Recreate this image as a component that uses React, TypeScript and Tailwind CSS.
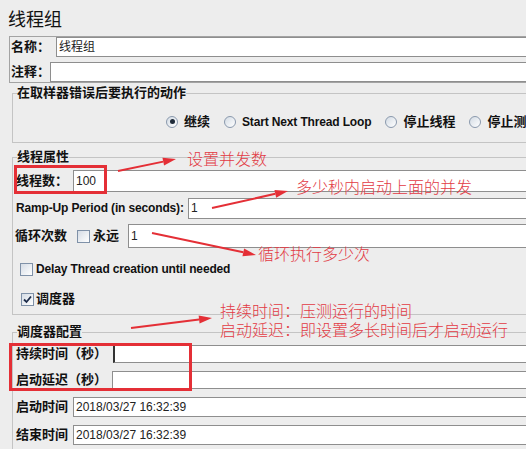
import React from 'react';

const Radio = ({ checked = false, label, latin = false }: { checked?: boolean; label: string; latin?: boolean }) => (
  <div className="flex shrink-0 items-center gap-[6px]">
    <span className="flex h-[12px] w-[12px] items-center justify-center rounded-full border border-[#8a99ad] bg-linear-to-br from-[#d3dbe4] to-white">
      {checked && <span className="h-[5px] w-[5px] rounded-full bg-[#1e2a38]" />}
    </span>
    <span
      className={`whitespace-nowrap font-bold leading-none ${latin ? 'text-[12px] tracking-[-0.15px]' : 'text-[13px]'}`}
    >
      {label}
    </span>
  </div>
);

const Check = ({ checked = false }: { checked?: boolean }) => (
  <span className="flex h-[13px] w-[13px] shrink-0 items-center justify-center border border-[#7f91a8] bg-linear-to-br from-[#d5dce5] to-white">
    {checked && (
      <svg width="11" height="11" viewBox="0 0 11 11">
        <path d="M2 5.5 L4.5 8 L9 2.5" fill="none" stroke="#1d2c4a" strokeWidth="1.8" />
      </svg>
    )}
  </span>
);

const Field = ({ value = '', h, caret = false }: { value?: string; h: string; caret?: boolean }) => (
  <div
    className={`flex flex-1 items-center border border-r-0 border-[#8e8e8e] bg-white pl-[2px] text-[12px] text-[#222] ${h} ${
      caret ? 'border-l-2 border-l-[#333]' : ''
    }`}
  >
    {value}
  </div>
);

const Label = ({ text, w, size = 'text-[13px]' }: { text: string; w: string; size?: string }) => (
  <span className={`shrink-0 whitespace-nowrap font-bold ${size} ${w}`}>{text}</span>
);

const Note = ({ children, className }: { children: React.ReactNode; className: string }) => (
  <div
    className={`absolute whitespace-nowrap font-['Noto_Sans_CJK_SC',sans-serif] text-[16px] font-light leading-[19px] text-[#e23a44] ${className}`}
  >
    {children}
  </div>
);

const Arrow = ({ x1, y1, x2, y2 }: { x1: number; y1: number; x2: number; y2: number }) => {
  const a = Math.atan2(y2 - y1, x2 - x1);
  const len = 13;
  const w = 4;
  const bx = x2 - len * Math.cos(a);
  const by = y2 - len * Math.sin(a);
  const px = -Math.sin(a) * w;
  const py = Math.cos(a) * w;
  return (
    <g>
      <line x1={x1} y1={y1} x2={bx} y2={by} stroke="#e42f36" strokeWidth="2" />
      <polygon points={`${x2},${y2} ${bx + px},${by + py} ${bx - px},${by - py}`} fill="#e42f36" />
    </g>
  );
};

export default function App() {
  return (
    <div className="relative h-[449px] w-[526px] overflow-hidden bg-[#ededed] font-['Liberation_Sans','Noto_Sans_CJK_SC',sans-serif] text-[#111]">
      <div className="w-[640px]">
        <div className="flex h-[36px] items-center pl-[8px] font-['Noto_Sans_CJK_SC',sans-serif] text-[18px]">线程组</div>

        {/* name / comment */}
        <div className="ml-[9px] border-y border-l border-[#a3a3a3]">
          <div className="flex h-[20px] items-center pl-[1px]">
            <Label text="名称：" w="w-[45px]" />
            <Field h="h-[20px]" value="线程组" />
          </div>
          <div className="mt-[5px] flex h-[20px] items-center pl-[1px]">
            <Label text="注释：" w="w-[39px]" />
            <Field h="h-[20px]" />
          </div>
        </div>

        {/* action on error */}
        <fieldset className="ml-[12px] mt-[2px] border border-r-0 border-[#c4c4c4]">
          <legend className="ml-[4px] text-[13px] font-bold leading-[16px]">在取样器错误后要执行的动作</legend>
          <div className="flex h-[41px] items-center gap-[14px] pl-[153px]">
            <Radio checked label="继续" />
            <Radio latin label="Start Next Thread Loop" />
            <Radio label="停止线程" />
            <Radio label="停止测试" />
          </div>
        </fieldset>

        {/* thread properties */}
        <fieldset className="ml-[12px] mt-[6px] border border-r-0 border-[#c4c4c4] pb-[3px]">
          <legend className="ml-[4px] text-[13px] font-bold leading-[16px]">线程属性</legend>
          <div className="mt-[2px] flex h-[28px] items-center pl-[3px]">
            <Label text="线程数：" w="w-[57px]" />
            <Field h="h-[22px]" value="100" />
          </div>
          <div className="flex h-[26px] items-center pl-[3px]">
            <Label text="Ramp-Up Period (in seconds):" w="w-[172px] tracking-[-0.15px]" size="text-[12px]" />
            <Field h="h-[21px]" value="1" />
          </div>
          <div className="flex h-[30px] items-center pl-[2px]">
            <Label text="循环次数" w="w-[62px]" />
            <Check />
            <Label text="永远" w="ml-[3px] w-[35px]" />
            <Field h="h-[24px]" value="1" />
          </div>
          <div className="flex h-[36px] items-center gap-[3px] pl-[7px]">
            <Check />
            <Label text="Delay Thread creation until needed" w="tracking-[-0.15px]" size="text-[12px]" />
          </div>
          <div className="flex h-[24px] items-center gap-[2px] pl-[8px]">
            <Check checked />
            <Label text="调度器" w="" />
          </div>
        </fieldset>

        {/* scheduler */}
        <fieldset className="ml-[12px] mt-[9px] border border-r-0 border-[#c4c4c4]">
          <legend className="ml-[4px] text-[13px] font-bold leading-[16px]">调度器配置</legend>
          <div className="flex h-[27px] items-center pl-[3px]">
            <Label text="持续时间（秒）" w="w-[97px]" />
            <Field h="h-[18px]" caret />
          </div>
          <div className="flex h-[25px] items-center pl-[3px]">
            <Label text="启动延迟（秒）" w="w-[96px]" />
            <Field h="h-[18px]" />
          </div>
          <div className="flex h-[29px] items-center pl-[3px]">
            <Label text="启动时间" w="w-[57px]" />
            <Field h="h-[20px]" value="2018/03/27 16:32:39" />
          </div>
          <div className="flex h-[28px] items-center pl-[3px]">
            <Label text="结束时间" w="w-[57px]" />
            <Field h="h-[20px]" value="2018/03/27 16:32:39" />
          </div>
        </fieldset>
      </div>

      {/* annotations */}
      <div className="absolute left-[14px] top-[165px] h-[29px] w-[93px] border-[3px] border-[#e42f36]" />
      <div className="absolute left-[9px] top-[343px] h-[48px] w-[183px] border-[3px] border-[#e42f36]" />
      <Note className="left-[187px] top-[149px]">设置并发数</Note>
      <Note className="left-[296px] top-[177px]">多少秒内启动上面的并发</Note>
      <Note className="left-[258px] top-[244px]">循环执行多少次</Note>
      <Note className="left-[220px] top-[301px]">
        持续时间：压测运行的时间
        <br />
        启动延迟：即设置多长时间后才启动运行
      </Note>
      <svg className="pointer-events-none absolute left-0 top-0" width="526" height="449">
        <Arrow x1={118} y1={171} x2={176} y2={159} />
        <Arrow x1={212} y1={208} x2={288} y2={191} />
        <Arrow x1={152} y1={233} x2={256} y2={255} />
        <Arrow x1={131} y1={328} x2={212} y2={318} />
      </svg>
    </div>
  );
}
